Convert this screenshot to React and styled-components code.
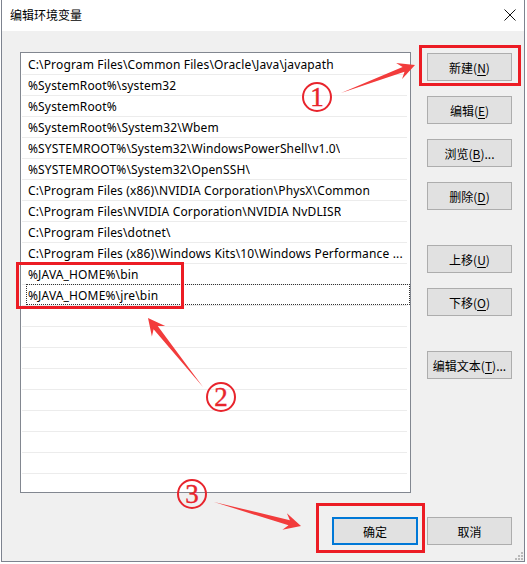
import React from 'react';
import styled, { createGlobalStyle } from 'styled-components';

const GlobalStyle = createGlobalStyle`
  html, body {
    margin: 0;
    padding: 0;
    background: #ffffff;
  }
  body {
    font-family: "Noto Sans", "Noto Sans CJK SC", sans-serif;
    font-size: 12px;
    color: #000;
  }
`;

// the ninth path is shown already shortened, as the dialog draws it
const entries = [
  'C:\\Program Files\\Common Files\\Oracle\\Java\\javapath',
  '%SystemRoot%\\system32',
  '%SystemRoot%',
  '%SystemRoot%\\System32\\Wbem',
  '%SYSTEMROOT%\\System32\\WindowsPowerShell\\v1.0\\',
  '%SYSTEMROOT%\\System32\\OpenSSH\\',
  'C:\\Program Files (x86)\\NVIDIA Corporation\\PhysX\\Common',
  'C:\\Program Files\\NVIDIA Corporation\\NVIDIA NvDLISR',
  'C:\\Program Files\\dotnet\\',
  'C:\\Program Files (x86)\\Windows Kits\\10\\Windows Performance ...',
  '%JAVA_HOME%\\bin',
  '%JAVA_HOME%\\jre\\bin',
];

const ROW_COUNT = 21;
const FOCUSED = 11;

// tapered annotation arrow, tail is a point, head has swept barbs
function arrowPoints(x1, y1, x2, y2, head = 17, headW = 8.5, neck = 2.6) {
  const dx = x2 - x1;
  const dy = y2 - y1;
  const len = Math.hypot(dx, dy);
  const ux = dx / len;
  const uy = dy / len;
  const nx = -uy;
  const ny = ux;
  const bx = x2 - ux * head;
  const by = y2 - uy * head;
  const kx = x2 - ux * head * 0.72;
  const ky = y2 - uy * head * 0.72;
  const p = [
    [x1, y1],
    [kx + nx * neck, ky + ny * neck],
    [bx + nx * headW, by + ny * headW],
    [x2, y2],
    [bx - nx * headW, by - ny * headW],
    [kx - nx * neck, ky - ny * neck],
  ];
  return p.map(([a, b]) => `${a.toFixed(1)},${b.toFixed(1)}`).join(' ');
}

const App = () => {
  const rows = Array.from({ length: ROW_COUNT }, (_, i) => entries[i] || '');
  return (
    <Page>
      <GlobalStyle />
      <Window>
        <TitleBar>
          <Title>编辑环境变量</Title>
          <CloseIcon width="12" height="12" viewBox="0 0 12 12">
            <path d="M0.5 0.5 L11.5 11.5 M11.5 0.5 L0.5 11.5" stroke="#111" strokeWidth="1" />
          </CloseIcon>
        </TitleBar>
        <Body>
          <Main>
            <List>
              {rows.map((text, i) => (
                <Row key={i} $focused={i === FOCUSED}>
                  <RowText>{text}</RowText>
                </Row>
              ))}
            </List>
            <Side>
              <Button>新建(<u>N</u>)</Button>
              <Button>编辑(<u>E</u>)</Button>
              <Button>浏览(<u>B</u>)...</Button>
              <Button>删除(<u>D</u>)</Button>
              <Button $spaced>上移(<u>U</u>)</Button>
              <Button>下移(<u>O</u>)</Button>
              <Button $spaced>编辑文本(<u>T</u>)...</Button>
            </Side>
          </Main>
          <Footer>
            <Button $default>确定</Button>
            <Button>取消</Button>
          </Footer>
          <Grip width="9" height="9" viewBox="0 0 9 9">
            <g fill="#b9b9b9">
              <rect x="7" y="1" width="2" height="2" />
              <rect x="4" y="4" width="2" height="2" />
              <rect x="7" y="4" width="2" height="2" />
              <rect x="1" y="7" width="2" height="2" />
              <rect x="4" y="7" width="2" height="2" />
              <rect x="7" y="7" width="2" height="2" />
            </g>
          </Grip>
        </Body>
      </Window>

      <Overlay width="527" height="564" viewBox="0 0 527 564">
        <g fill="none" stroke="#ec1c24" strokeWidth="3">
          <rect x="420.5" y="46.5" width="99" height="38" />
          <rect x="17.5" y="263.5" width="165" height="44" />
          <rect x="317.5" y="504.5" width="106" height="47" />
        </g>
        <g fill="#f23c3c">
          <polygon points={arrowPoints(341, 93, 415, 65)} />
          <polygon points={arrowPoints(203, 387, 148, 318)} />
          <polygon points={arrowPoints(214, 502, 301, 526)} />
        </g>
      </Overlay>
      <Marker $x={317} $y={97}>1</Marker>
      <Marker $x={221} $y={397}>2</Marker>
      <Marker $x={192} $y={494}>3</Marker>
    </Page>
  );
};

const Page = styled.div`
  position: relative;
  width: 527px;
  height: 564px;
  overflow: hidden;
`;

const Window = styled.div`
  box-sizing: border-box;
  margin-left: 1px;
  width: 524px;
  height: 562px;
  display: flex;
  flex-direction: column;
  border: 1px solid #7d838f;
  border-top: none;
  background: #f0f0f0;
`;

const TitleBar = styled.div`
  height: 31px;
  flex: none;
  display: flex;
  align-items: center;
  justify-content: space-between;
  padding: 0 8px 0 8px;
  background: #ffffff;
`;

const Title = styled.span`
  font-family: "Microsoft YaHei", "Noto Sans CJK SC", sans-serif;
  font-size: 12px;
  color: #000;
  margin-top: -2px;
`;

const CloseIcon = styled.svg`
  display: block;
  margin-top: -2px;
`;

const Body = styled.div`
  position: relative;
  flex: 1;
  display: flex;
  flex-direction: column;
  padding: 21px 12px 0 18px;
`;

const Main = styled.div`
  display: flex;
  gap: 16px;
`;

const List = styled.div`
  box-sizing: border-box;
  width: 391px;
  height: 441px;
  padding-top: 1px;
  border: 1px solid #828790;
  background: #ffffff;
  overflow: hidden;
`;

const Row = styled.div`
  position: relative;
  box-sizing: border-box;
  height: 21px;
  margin: 0 3px 0 1px;
  padding: 0 0 0 6px;
  display: flex;
  align-items: center;
  border-bottom: 1px solid #ececec;

  &::after {
    content: '';
    display: ${p => (p.$focused ? 'block' : 'none')};
    position: absolute;
    left: 4px;
    right: -3px;
    top: -1px;
    bottom: 0;
    border: 1px dotted #333;
  }
`;

const RowText = styled.span`
  font-family: "Noto Sans", "Noto Sans CJK SC", sans-serif;
  font-size: 12px;
  letter-spacing: 0.15px;
  line-height: 16px;
  white-space: nowrap;
  overflow: hidden;
  margin-top: 1px;
`;

const Side = styled.div`
  display: flex;
  flex-direction: column;
  gap: 15px;
  padding-top: 1px;
`;

const Button = styled.button`
  box-sizing: border-box;
  width: ${p => (p.$default ? '86px' : '85px')};
  height: 28px;
  margin: 0;
  margin-top: ${p => (p.$spaced ? '20px' : '0')};
  padding: 0;
  font-family: "Microsoft YaHei", "Noto Sans CJK SC", sans-serif;
  font-size: 12px;
  color: #000;
  background: #e1e1e1;
  border: ${p => (p.$default ? '2px solid #0078d7' : '1px solid #adadad')};
  border-radius: 0;

  u {
    text-underline-offset: 2px;
  }
`;

const Footer = styled.div`
  display: flex;
  justify-content: flex-end;
  gap: 9px;
  margin-top: 24px;
`;

const Grip = styled.svg`
  position: absolute;
  right: 1px;
  bottom: 1px;
`;

const Overlay = styled.svg`
  position: absolute;
  left: 0;
  top: 0;
  pointer-events: none;
`;

const Marker = styled.span`
  position: absolute;
  left: ${p => p.$x - 15}px;
  top: ${p => p.$y - 15}px;
  box-sizing: border-box;
  width: 30px;
  height: 30px;
  border: 2px solid #e8242c;
  border-radius: 50%;
  display: flex;
  align-items: center;
  justify-content: center;
  font-family: "Liberation Serif", "DejaVu Serif", serif;
  font-size: 27px;
  line-height: 1;
  color: #e8242c;
  padding-top: 1px;
  -webkit-text-stroke: 0.4px #e8242c;
`;

export default App;
